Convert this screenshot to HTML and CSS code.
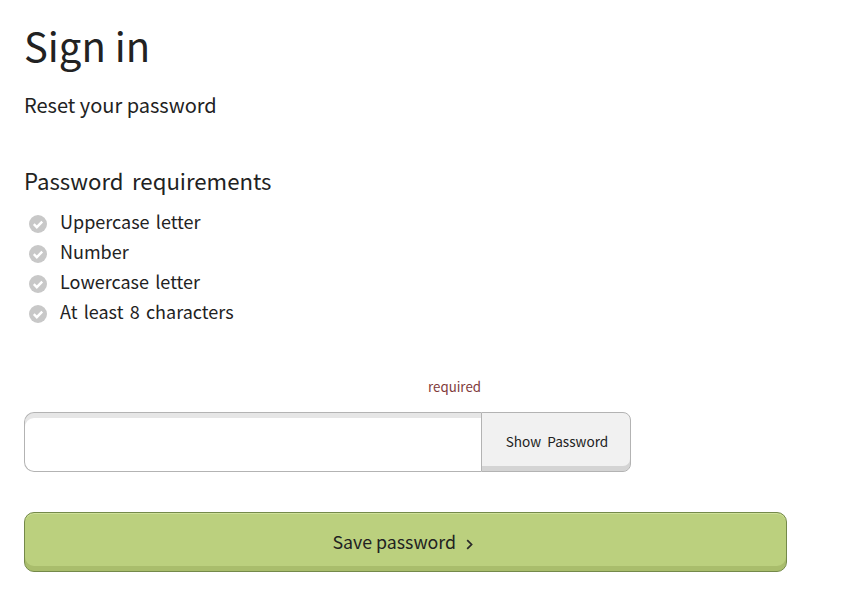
FILE: index.html
```html
<!DOCTYPE html>
<html lang="en">
<head>
  <meta charset="UTF-8">
  <meta name="viewport" content="width=device-width, initial-scale=1.0">
  <title>Sign in</title>
  <link rel="stylesheet" href="styles.css">
</head>
<body>
  <main class="page">
    <h1 class="page-title">Sign in</h1>
    <p class="page-subtitle">Reset your password</p>

    <!-- requirements -->
    <h2 class="req-title">Password requirements</h2>
    <ul class="req-list">
      <li class="req-item">
        <svg class="req-icon" viewBox="0 0 18 18"><circle cx="9" cy="9" r="9" fill="#c8c8c8"/><path d="M4.8 9.2l3 3 5.4-5.6" fill="none" stroke="#fff" stroke-width="2.4"/></svg>
        Uppercase letter
      </li>
      <li class="req-item">
        <svg class="req-icon" viewBox="0 0 18 18"><circle cx="9" cy="9" r="9" fill="#c8c8c8"/><path d="M4.8 9.2l3 3 5.4-5.6" fill="none" stroke="#fff" stroke-width="2.4"/></svg>
        Number
      </li>
      <li class="req-item">
        <svg class="req-icon" viewBox="0 0 18 18"><circle cx="9" cy="9" r="9" fill="#c8c8c8"/><path d="M4.8 9.2l3 3 5.4-5.6" fill="none" stroke="#fff" stroke-width="2.4"/></svg>
        Lowercase letter
      </li>
      <li class="req-item">
        <svg class="req-icon" viewBox="0 0 18 18"><circle cx="9" cy="9" r="9" fill="#c8c8c8"/><path d="M4.8 9.2l3 3 5.4-5.6" fill="none" stroke="#fff" stroke-width="2.4"/></svg>
        At least 8 characters
      </li>
    </ul>

    <!-- password field -->
    <form class="reset-form">
      <div class="field-note">required</div>
      <div class="password-field">
        <input class="password-input" type="password" aria-label="Password">
        <button class="show-button" type="button">Show Password</button>
      </div>
      <button class="save-button" type="button">
        Save password
        <svg class="save-arrow" viewBox="0 0 8 12"><path d="M1.2 1.2l4.8 4.8-4.8 4.8" fill="none" stroke="#2a2a2a" stroke-width="1.9"/></svg>
      </button>
    </form>
  </main>
</body>
</html>
```

FILE: styles.css
```css
/* base */
body {
  margin: 0;
  background: #fff;
  color: #222;
  font-family: "Noto Sans CJK JP", "Noto Sans", sans-serif;
}

.page {
  padding: 15px 24px 0;
}

.page-title {
  margin: 0;
  font-size: 40px;
  font-weight: 400;
  line-height: 60px;
}

.page-subtitle {
  margin: 14px 0 0;
  font-size: 20px;
  line-height: 32px;
}

/* requirements */
.req-title {
  margin: 42px 0 0;
  font-size: 22.2px;
  font-weight: 400;
  line-height: 34px;
  word-spacing: 3.5px;
}

.req-list {
  margin: 9px 0 0;
  padding: 0;
  list-style: none;
}

.req-item {
  display: flex;
  align-items: center;
  gap: 13.5px;
  height: 30px;
  padding-left: 4.5px;
  font-size: 18px;
  word-spacing: 2.2px;
}

.req-icon {
  width: 18px;
  height: 18px;
  margin-top: 5px;
}

/* form */
.reset-form {
  margin-top: 49px;
  width: 763px;
}

.field-note {
  width: 607px;
  height: 24px;
  padding-right: 150px;
  box-sizing: border-box;
  color: #7f3b3b;
  font-size: 13.3px;
  line-height: 24px;
  text-align: right;
}

.password-field {
  display: flex;
  width: 607px;
  height: 60px;
  margin-top: 13px;
}

.password-input {
  flex: 1;
  min-width: 0;
  padding: 0 12px;
  box-sizing: border-box;
  border: 1px solid #b3b3b3;
  border-right: 0;
  border-radius: 10px 0 0 10px;
  background: #fff;
  box-shadow: inset 0 5px 0 #e6e6e6;
  outline: none;
}

.show-button {
  width: 150px;
  padding: 0 0 2px 2px;
  border: 1px solid #b3b3b3;
  border-radius: 0 8px 8px 0;
  background: #f1f1f1;
  box-shadow: inset 0 -5px 0 #d4d4d4;
  color: #222;
  font-family: inherit;
  font-size: 13.6px;
  word-spacing: 3px;
}

.save-button {
  display: flex;
  align-items: center;
  justify-content: center;
  gap: 10px;
  width: 100%;
  height: 60px;
  margin-top: 40px;
  padding: 0 5px 2px 0;
  border: 1px solid #74894a;
  border-radius: 10px;
  background: #bbd07e;
  box-shadow: inset 0 1px 0 #cfe09a, inset 0 -5px 0 #a9bd6c;
  color: #222;
  font-family: inherit;
  font-size: 17.8px;
}

.save-arrow {
  width: 7.5px;
  height: 11px;
  margin-top: 7px;
}
```
